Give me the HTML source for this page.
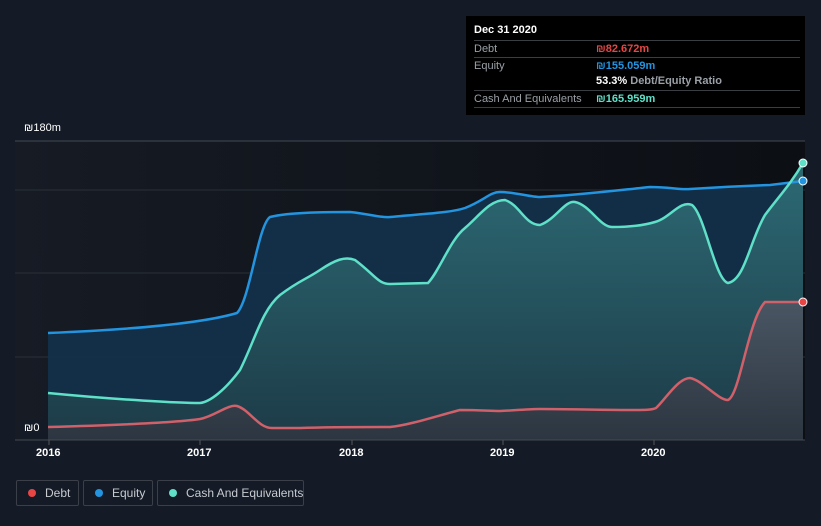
<!DOCTYPE html><html><head><style>
body{margin:0;width:821px;height:526px;background:#151b26;font-family:"Liberation Sans",sans-serif;overflow:hidden;position:relative}
.t{position:absolute;font-size:11px;color:#fff;white-space:nowrap}
.tip{position:absolute;left:466px;top:16px;width:339px;height:99px;background:#000;}
.row{position:absolute;left:8px;width:326px;border-top:1px solid #3a3d42;font-size:11px;color:#9aa0a6;height:16px;line-height:16px;white-space:nowrap}
.row span{position:absolute;left:122px;font-weight:bold}
.leg{position:absolute;top:480px;height:26px;border:1px solid #3a3f48;border-radius:2px;font-size:12px;color:#c7cbd0;line-height:24px;box-sizing:border-box;white-space:nowrap}
.leg i{position:absolute;left:11px;top:8px;width:8px;height:8px;border-radius:50%}
</style></head><body>
<svg width="821" height="526" style="position:absolute;left:0;top:0">
<defs><linearGradient id="bg" x1="0" x2="1"><stop offset="0" stop-color="#161b24"/><stop offset="1" stop-color="#0c0f14"/></linearGradient>
<linearGradient id="cf" x1="0" y1="0" x2="0" y2="1"><stop offset="0" stop-color="#2f6f78"/><stop offset="1" stop-color="#1d3c47"/></linearGradient>
<linearGradient id="df" x1="0" y1="0" x2="0" y2="1"><stop offset="0" stop-color="#4d5663"/><stop offset="1" stop-color="#2e3540"/></linearGradient></defs>
<rect x="15" y="141" width="790" height="299" fill="url(#bg)"/>
<line x1="15" y1="141" x2="805" y2="141" stroke="#444a52"/>
<g stroke="#2a3038"><line x1="15" y1="190" x2="805" y2="190"/><line x1="15" y1="273" x2="805" y2="273"/><line x1="15" y1="357" x2="805" y2="357"/></g>
<path d="M48,333 C120,330 200,324 237,313 C250,300 258,225 270,217 C290,212 330,212 350,212 C370,214 380,218 390,217 C420,214 450,213 465,208 C485,200 490,192 500,192 C515,192 530,197 540,197 C580,195 620,190 650,187 C670,187 680,190 690,189 C720,187 740,186 770,185 L803,181 L803,440 L48,440Z" fill="#13304a" opacity="0.95"/>
<path d="M48,393 C120,400 180,403 200,403 C210,402 225,390 240,370 C255,340 262,310 280,295 C300,280 305,280 320,270 C335,260 345,256 355,260 C375,275 378,284 390,284 L428,283 C440,270 450,240 465,228 C480,215 490,200 505,200 C520,205 525,225 540,225 C555,220 565,200 575,202 C590,205 600,227 612,227 C630,227 645,225 655,222 C670,218 680,200 692,205 C705,215 715,280 728,283 C745,280 750,240 765,215 C780,195 790,185 803,163 L803,440 L48,440Z" fill="url(#cf)" opacity="0.92"/>
<path d="M48,427 C120,425 180,422 200,419 C215,416 228,404 237,406 C250,410 258,428 272,428 L300,428 C330,427 350,427 390,427 C410,425 440,415 460,410 C480,410 490,411 500,411 C520,410 530,409 540,409 C570,409 600,410 630,410 C645,410 652,410 656,408 C665,400 678,378 690,378 C702,380 718,400 728,400 C740,395 748,320 765,302 L803,302 L803,440 L48,440Z" fill="url(#df)" opacity="0.9"/>
<g fill="none" stroke-width="2.5">
<path d="M48,333 C120,330 200,324 237,313 C250,300 258,225 270,217 C290,212 330,212 350,212 C370,214 380,218 390,217 C420,214 450,213 465,208 C485,200 490,192 500,192 C515,192 530,197 540,197 C580,195 620,190 650,187 C670,187 680,190 690,189 C720,187 740,186 770,185 L803,181" stroke="#2394df"/>
<path d="M48,393 C120,400 180,403 200,403 C210,402 225,390 240,370 C255,340 262,310 280,295 C300,280 305,280 320,270 C335,260 345,256 355,260 C375,275 378,284 390,284 L428,283 C440,270 450,240 465,228 C480,215 490,200 505,200 C520,205 525,225 540,225 C555,220 565,200 575,202 C590,205 600,227 612,227 C630,227 645,225 655,222 C670,218 680,200 692,205 C705,215 715,280 728,283 C745,280 750,240 765,215 C780,195 790,185 803,163" stroke="#5fe0c8"/>
<path d="M48,427 C120,425 180,422 200,419 C215,416 228,404 237,406 C250,410 258,428 272,428 L300,428 C330,427 350,427 390,427 C410,425 440,415 460,410 C480,410 490,411 500,411 C520,410 530,409 540,409 C570,409 600,410 630,410 C645,410 652,410 656,408 C665,400 678,378 690,378 C702,380 718,400 728,400 C740,395 748,320 765,302 L803,302" stroke="#d0606a"/>
</g>
<circle cx="803" cy="163" r="4" fill="#5fe0c8" stroke="#fff"/><circle cx="803" cy="181" r="4" fill="#2394df" stroke="#fff"/><circle cx="803" cy="302" r="4" fill="#e84545" stroke="#fff"/>
<line x1="15" y1="440" x2="805" y2="440" stroke="#444a52"/>
<g stroke="#555"><line x1="49" y1="440" x2="49" y2="445"/><line x1="200" y1="440" x2="200" y2="445"/><line x1="352" y1="440" x2="352" y2="445"/><line x1="503" y1="440" x2="503" y2="445"/><line x1="654" y1="440" x2="654" y2="445"/></g>
<rect x="20" y="420" width="27" height="18" fill="#151b26"/>
</svg>
<div class="t" style="left:24px;top:122px">₪180m</div>
<div class="t" style="left:24px;top:422px">₪0</div>
<div class="t" style="left:36px;top:447px;font-weight:bold">2016</div>
<div class="t" style="left:187px;top:447px;font-weight:bold">2017</div>
<div class="t" style="left:339px;top:447px;font-weight:bold">2018</div>
<div class="t" style="left:490px;top:447px;font-weight:bold">2019</div>
<div class="t" style="left:641px;top:447px;font-weight:bold">2020</div>
<div class="tip">
<div style="position:absolute;left:8px;top:8px;font-size:11px;color:#fff;font-weight:bold">Dec 31 2020</div>
<div class="row" style="top:24px">Debt<span style="color:#e84545">₪82.672m</span></div>
<div class="row" style="top:41px">Equity<span style="color:#2394df">₪155.059m</span></div>
<div class="row" style="top:57px;border:none"><span style="color:#fff">53.3% <b style="color:#9aa0a6">Debt/Equity Ratio</b></span></div>
<div class="row" style="top:74px">Cash And Equivalents<span style="color:#5fe0c8">₪165.959m</span></div>
<div class="row" style="top:91px;height:0"></div>
</div>
<div class="leg" style="left:16px;width:63px"><i style="background:#e84545"></i><span style="position:absolute;left:28px">Debt</span></div>
<div class="leg" style="left:83px;width:70px"><i style="background:#2394df"></i><span style="position:absolute;left:28px">Equity</span></div>
<div class="leg" style="left:157px;width:147px"><i style="background:#5fe0c8"></i><span style="position:absolute;left:28px">Cash And Equivalents</span></div>
</body></html>
